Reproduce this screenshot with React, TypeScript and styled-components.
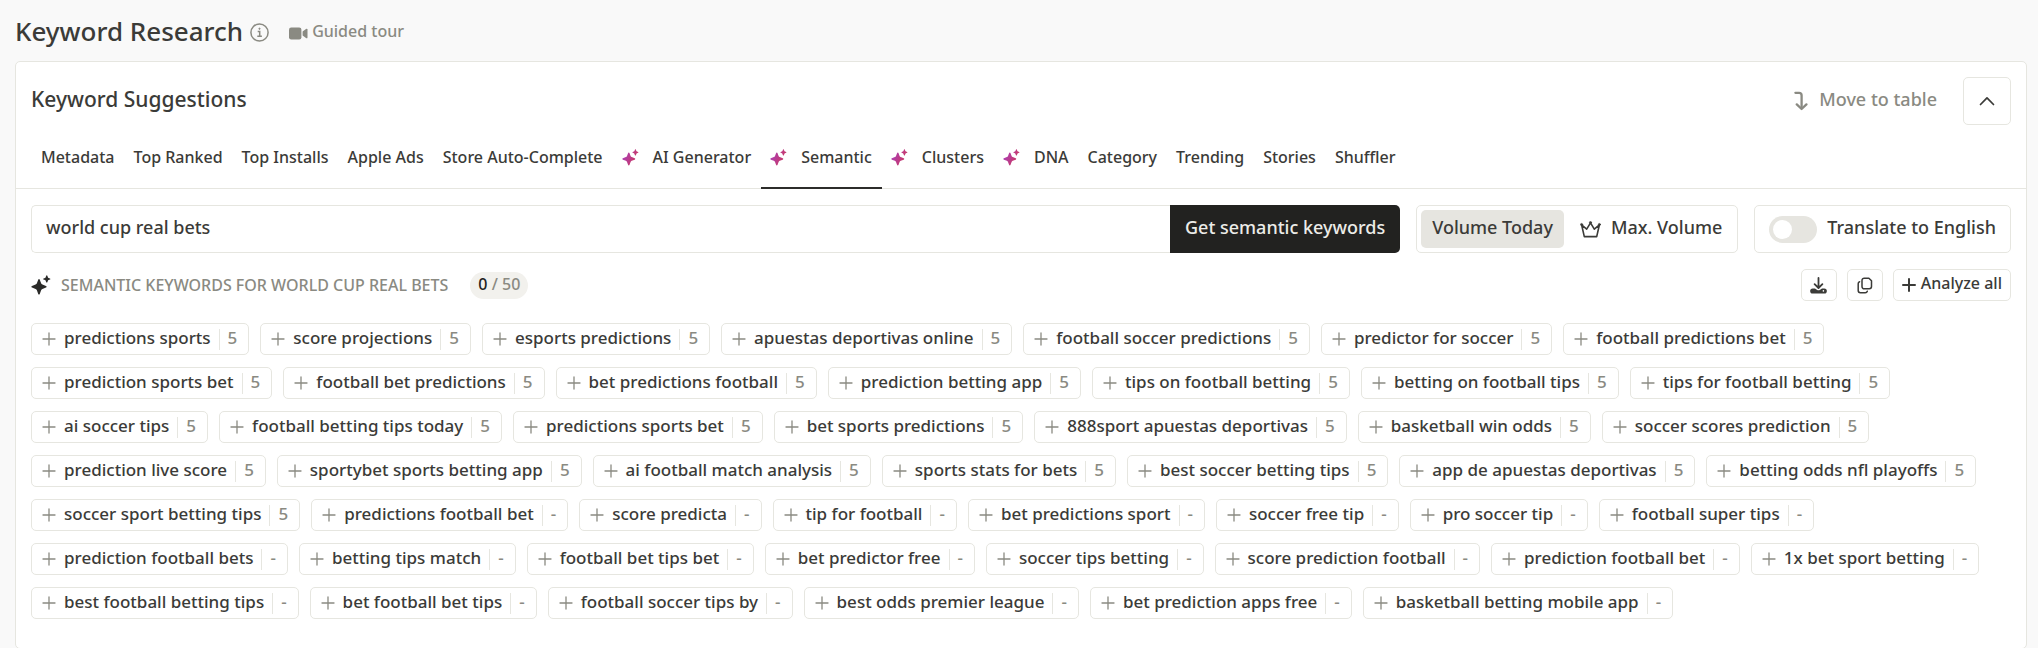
import React, { useState } from "react";
import styled, { createGlobalStyle, css } from "styled-components";

const color = {
  page: "#f9f9f9",
  surface: "#ffffff",
  ink: "#3b3b38",
  dark: "#222220",
  muted: "#8a8a82",
  line: "#e6e6e0",
  fill: "#e6e5e0",
  badge: "#f2f1ed",
};

const GlobalStyle = createGlobalStyle`
  *, *::before, *::after { box-sizing: border-box; }
  body {
    margin: 0;
    background: ${color.page};
    color: ${color.ink};
    font-family: "Noto Sans", "Open Sans", sans-serif;
    font-weight: 500;
  }
  button, input { font: inherit; color: inherit; margin: 0; }
  button { cursor: pointer; background: none; border: 0; padding: 0; }
  h1, h2, h3, p, ul { margin: 0; padding: 0; font-weight: 500; }
  svg { display: block; flex: none; }
`;

const Page = styled.main`
  padding: 0 11px 0 15px;
`;

const PageHeader = styled.header`
  display: flex;
  align-items: center;
  min-height: 61px;
`;

const PageTitle = styled.h1`
  font-size: 26px;
  line-height: 32px;
`;

const InfoButton = styled.button`
  margin: 3px 0 0 7px;
  color: ${color.muted};
`;

const TourLink = styled.a`
  display: flex;
  align-items: center;
  gap: 4px;
  margin-left: 20px;
  color: ${color.muted};
  font-size: 16px;
  line-height: 24px;
  text-decoration: none;

  svg { margin-top: 6px; }
`;

const Card = styled.section`
  background: ${color.surface};
  border: 1px solid ${color.line};
  border-radius: 5px;
`;

const CardHeader = styled.div`
  display: flex;
  align-items: center;
  gap: 26px;
  padding: 15px 15px 0;
`;

const CardTitle = styled.h2`
  flex: 1;
  font-size: 21px;
  line-height: 28px;
  padding-bottom: 4px;
`;

/* Lifts a label slightly above the optical centre of its control. */
const Label = styled.span`
  padding-bottom: 4px;
  white-space: nowrap;
`;

const MoveButton = styled.button`
  display: flex;
  align-items: center;
  gap: 11px;
  color: ${color.muted};
  font-size: 18px;
`;

const CollapseButton = styled.button`
  display: grid;
  place-items: center;
  width: 48px;
  height: 48px;
  border: 1px solid ${color.line};
  border-radius: 5px;
`;

const Tabs = styled.nav`
  display: flex;
  padding: 0 16px;
  border-bottom: 1px solid ${color.line};
`;

const Tab = styled.button<{ $active?: boolean }>`
  display: flex;
  align-items: center;
  gap: 14px;
  height: 64px;
  margin-bottom: -1px;
  padding: 0 10px 0 9px;
  border-top: 2px solid transparent;
  border-bottom: 2px solid ${(p) => (p.$active ? "#2c2c2a" : "transparent")};
  font-size: 16px;
  white-space: nowrap;
`;

const CardBody = styled.div`
  padding: 16px 15px 29px;
`;

const Controls = styled.div`
  display: flex;
  gap: 16px;
`;

const SearchForm = styled.form`
  display: flex;
  flex: 1;
  min-width: 0;
  height: 48px;
`;

const SearchInput = styled.input`
  flex: 1;
  min-width: 0;
  padding: 0 14px 4px;
  border: 1px solid ${color.line};
  border-right: 0;
  border-radius: 5px 0 0 5px;
  background: ${color.surface};
  font-size: 18px;
  outline: none;
`;

const SubmitButton = styled.button`
  padding: 0 15px;
  border-radius: 0 5px 5px 0;
  background: ${color.dark};
  color: #ecece8;
  font-size: 18px;
  white-space: nowrap;
`;

const outlined = css`
  display: flex;
  align-items: center;
  height: 48px;
  border: 1px solid ${color.line};
  border-radius: 5px;
  font-size: 18px;
`;

const VolumeSwitch = styled.div`
  ${outlined}
  padding: 0 4px;
`;

const VolumeOption = styled.button<{ $active?: boolean }>`
  display: flex;
  align-items: center;
  gap: 10px;
  height: 38px;
  padding: 0 11px 0 ${(p) => (p.$active ? "11px" : "16px")};
  border-radius: 5px;
  background: ${(p) => (p.$active ? color.fill : "transparent")};
`;

const TranslateBox = styled.label`
  ${outlined}
  gap: 10px;
  padding: 0 14px;
`;

const Toggle = styled.input`
  appearance: none;
  flex: none;
  display: flex;
  align-items: center;
  width: 48px;
  height: 27px;
  padding: 0 4px;
  border-radius: 14px;
  background: ${color.fill};

  &::before {
    content: "";
    width: 19px;
    height: 19px;
    border-radius: 50%;
    background: ${color.surface};
  }
  &:checked {
    justify-content: flex-end;
    background: ${color.dark};
  }
`;

const ResultHeader = styled.div`
  display: flex;
  align-items: center;
  gap: 10px;
  min-height: 32px;
  margin: 16px 0 22px;
`;

const ResultTitle = styled.h3`
  color: ${color.muted};
  font-size: 16px;
  line-height: 24px;
  text-transform: uppercase;
`;

const Count = styled.span`
  margin-left: 12px;
  padding: 0 8px 3px;
  border-radius: 14px;
  background: ${color.badge};
  color: ${color.muted};
  font-size: 16px;
  line-height: 24px;

  b { color: ${color.dark}; font-weight: 500; }
`;

const Actions = styled.div`
  display: flex;
  gap: 10px;
  margin-left: auto;
`;

const ActionButton = styled.button`
  display: flex;
  align-items: center;
  justify-content: center;
  gap: 5px;
  min-width: 36px;
  height: 32px;
  padding: 0 8px;
  border: 1px solid ${color.line};
  border-radius: 5px;
  font-size: 16px;
`;

const KeywordList = styled.ul`
  display: flex;
  flex-wrap: wrap;
  gap: 12px 11px;
  list-style: none;
`;

const Chip = styled.button`
  display: flex;
  align-items: center;
  gap: 8px;
  height: 32px;
  padding: 0 11px 0 10px;
  border: 1px solid ${color.line};
  border-radius: 5px;
  font-size: 17px;
`;

const ChipVolume = styled.span`
  display: flex;
  align-items: center;
  height: 21px;
  padding: 0 0 4px 8px;
  border-left: 1px solid ${color.line};
  color: ${color.muted};
`;

const InfoIcon = () => (
  <svg width="19" height="19" viewBox="0 0 19 19" fill="none" stroke="currentColor" strokeWidth="1.5">
    <circle cx="9.5" cy="9.5" r="8.6" />
    <path d="M7.7 8.4h2v4.6M7.3 13.2h4.6" />
    <circle cx="9.5" cy="5.7" r="0.7" fill="currentColor" strokeWidth="0.7" />
  </svg>
);

const CameraIcon = () => (
  <svg width="19" height="13" viewBox="0 0 19 13" fill="currentColor">
    <rect x="0" y="0.5" width="12.4" height="12" rx="2.2" />
    <path d="M13.6 4.6 17 1.9c.7-.5 1.5-.1 1.5.7v7.8c0 .8-.8 1.2-1.5.7l-3.4-2.7z" />
  </svg>
);

const MoveIcon = () => (
  <svg width="14" height="20" viewBox="0 0 14 20" fill="none" stroke="currentColor" strokeWidth="2.3" strokeLinecap="round" strokeLinejoin="round">
    <path d="M1.4 1.8H5a2.6 2.6 0 0 1 2.6 2.6V17" />
    <path d="m2.8 13.4 4.8 4.6 4.8-4.6" />
  </svg>
);

const ChevronUp = () => (
  <svg width="16" height="10" viewBox="0 0 16 10" fill="none" stroke="currentColor" strokeWidth="1.7" strokeLinecap="round" strokeLinejoin="round">
    <path d="m1.5 8.5 6.5-6.7 6.5 6.7" />
  </svg>
);

const Sparkle = ({ size, fill }: { size: number; fill: string }) => (
  <svg width={size} height={size} viewBox="0 0 18 18" fill={fill}>
    <defs>
      <linearGradient id="sparkle" gradientUnits="userSpaceOnUse" x1="0" y1="4" x2="17" y2="12">
        <stop offset="0" stopColor="#a73fc0" />
        <stop offset="0.75" stopColor="#c43a72" />
      </linearGradient>
    </defs>
    <path d="M7.2 3.6c.4 0 .6.3.7.6l1.2 3.2c.2.6.6 1 1.2 1.2l3.2 1.3c.7.3.7 1.1 0 1.4l-3.2 1.2c-.6.2-1 .6-1.2 1.2l-1.2 3.3c-.3.7-1.1.7-1.4 0l-1.2-3.3c-.2-.6-.6-1-1.2-1.2L.9 11.3c-.7-.3-.7-1.1 0-1.4l3.2-1.3c.6-.2 1-.6 1.2-1.2l1.2-3.2c.1-.4.4-.6.7-.6z" />
    <path d="M14.2.3c.3 0 .4.2.5.4l.5 1.3c.1.3.3.5.6.6l1.3.5c.4.2.4.8 0 1l-1.3.5c-.3.1-.5.3-.6.6l-.5 1.3c-.2.4-.8.4-1 0l-.5-1.3c-.1-.3-.3-.5-.6-.6l-1.3-.5c-.4-.2-.4-.8 0-1l1.3-.5c.3-.1.5-.3.6-.6l.5-1.3c.1-.2.3-.4.5-.4z" />
  </svg>
);

const CrownIcon = () => (
  <svg width="21" height="17" viewBox="0 0 21 17" fill="none" stroke="currentColor" strokeWidth="1.6" strokeLinejoin="round" strokeLinecap="round">
    <path d="M1.6 3.8 4.3 15.6h12.4l2.7-11.8-5.1 4.4-3.8-6.4-3.8 6.4z" />
    <g fill="currentColor" strokeWidth="0.6">
      <circle cx="1.6" cy="3.5" r="1.1" />
      <circle cx="10.5" cy="1.5" r="1.1" />
      <circle cx="19.4" cy="3.5" r="1.1" />
    </g>
  </svg>
);

const DownloadIcon = () => (
  <svg width="17" height="17" viewBox="0 0 17 17">
    <path
      fill="currentColor"
      fillRule="evenodd"
      d="M2.7 11.4H5l2.2 1.5c.8.5 1.8.5 2.6 0l2.2-1.5h2.3a2.55 2.55 0 0 1 0 5.1H2.7a2.55 2.55 0 0 1 0-5.1zM13.4 13.1a.8.8 0 1 0 0 1.6.8.8 0 0 0 0-1.6z"
    />
    <path d="M8.5 1v9.8M4.6 7.2l3.9 3.8 3.9-3.8" fill="none" stroke="currentColor" strokeWidth="1.8" strokeLinecap="round" strokeLinejoin="round" />
  </svg>
);

const CopyIcon = () => (
  <svg width="16" height="17" viewBox="0 0 16 17" fill="none" stroke="currentColor" strokeWidth="1.5" strokeLinecap="round" strokeLinejoin="round">
    <path d="M7.2 1.2h4.7l2.6 2.6v5.8a2.2 2.2 0 0 1-2.2 2.2H7.2A2.2 2.2 0 0 1 5 9.6V3.4a2.2 2.2 0 0 1 2.2-2.2z" />
    <path d="M2.6 4.8a2 2 0 0 0-1.4 2v6.8a2.2 2.2 0 0 0 2.2 2.2h4.8a2.2 2.2 0 0 0 2.1-1.6" />
  </svg>
);

const PlusIcon = ({ weight = 1.3, stroke = "currentColor" }: { weight?: number; stroke?: string }) => (
  <svg width="14" height="14" viewBox="0 0 14 14" fill="none" stroke={stroke} strokeWidth={weight} strokeLinecap="round">
    <path d="M7 1v12M1 7h12" />
  </svg>
);

const tabs: { name: string; ai?: boolean }[] = [
  { name: "Metadata" },
  { name: "Top Ranked" },
  { name: "Top Installs" },
  { name: "Apple Ads" },
  { name: "Store Auto-Complete" },
  { name: "AI Generator", ai: true },
  { name: "Semantic", ai: true },
  { name: "Clusters", ai: true },
  { name: "DNA", ai: true },
  { name: "Category" },
  { name: "Trending" },
  { name: "Stories" },
  { name: "Shuffler" },
];

const withVolume = [
  "predictions sports", "score projections", "esports predictions", "apuestas deportivas online",
  "football soccer predictions", "predictor for soccer", "football predictions bet",
  "prediction sports bet", "football bet predictions", "bet predictions football",
  "prediction betting app", "tips on football betting", "betting on football tips",
  "tips for football betting", "ai soccer tips", "football betting tips today",
  "predictions sports bet", "bet sports predictions", "888sport apuestas deportivas",
  "basketball win odds", "soccer scores prediction", "prediction live score",
  "sportybet sports betting app", "ai football match analysis", "sports stats for bets",
  "best soccer betting tips", "app de apuestas deportivas", "betting odds nfl playoffs",
  "soccer sport betting tips",
];

const withoutVolume = [
  "predictions football bet", "score predicta", "tip for football", "bet predictions sport",
  "soccer free tip", "pro soccer tip", "football super tips", "prediction football bets",
  "betting tips match", "football bet tips bet", "bet predictor free", "soccer tips betting",
  "score prediction football", "prediction football bet", "1x bet sport betting",
  "best football betting tips", "bet football bet tips", "football soccer tips by",
  "best odds premier league", "bet prediction apps free", "basketball betting mobile app",
];

const keywords = [
  ...withVolume.map((text) => ({ text, volume: "5" })),
  ...withoutVolume.map((text) => ({ text, volume: "-" })),
];

export default function App() {
  const [activeTab, setActiveTab] = useState("Semantic");
  const [query, setQuery] = useState("world cup real bets");
  const [volume, setVolume] = useState<"today" | "max">("today");
  const [translate, setTranslate] = useState(false);

  return (
    <>
      <GlobalStyle />
      <Page>
        <PageHeader>
          <PageTitle>Keyword Research</PageTitle>
          <InfoButton type="button" aria-label="About keyword research"><InfoIcon /></InfoButton>
          <TourLink href="#tour"><CameraIcon />Guided tour</TourLink>
        </PageHeader>

        <Card>
          <CardHeader>
            <CardTitle>Keyword Suggestions</CardTitle>
            <MoveButton type="button"><MoveIcon /><Label>Move to table</Label></MoveButton>
            <CollapseButton type="button" aria-label="Collapse"><ChevronUp /></CollapseButton>
          </CardHeader>

          <Tabs>
            {tabs.map(({ name, ai }) => (
              <Tab key={name} type="button" $active={name === activeTab} onClick={() => setActiveTab(name)}>
                {ai && <Sparkle size={17} fill="url(#sparkle)" />}
                {name}
              </Tab>
            ))}
          </Tabs>

          <CardBody>
            <Controls>
              <SearchForm onSubmit={(e) => e.preventDefault()}>
                <SearchInput aria-label="Keyword" value={query} onChange={(e) => setQuery(e.target.value)} />
                <SubmitButton type="submit"><Label as="div">Get semantic keywords</Label></SubmitButton>
              </SearchForm>
              <VolumeSwitch>
                <VolumeOption type="button" $active={volume === "today"} onClick={() => setVolume("today")}>
                  <Label>Volume Today</Label>
                </VolumeOption>
                <VolumeOption type="button" $active={volume === "max"} onClick={() => setVolume("max")}>
                  <CrownIcon /><Label>Max. Volume</Label>
                </VolumeOption>
              </VolumeSwitch>
              <TranslateBox>
                <Toggle type="checkbox" role="switch" checked={translate} onChange={(e) => setTranslate(e.target.checked)} />
                <Label>Translate to English</Label>
              </TranslateBox>
            </Controls>

            <ResultHeader>
              <Sparkle size={20} fill="#2b2b29" />
              <ResultTitle>Semantic keywords for world cup real bets</ResultTitle>
              <Count><b>0</b> / 50</Count>
              <Actions>
                <ActionButton type="button" aria-label="Download"><DownloadIcon /></ActionButton>
                <ActionButton type="button" aria-label="Copy"><CopyIcon /></ActionButton>
                <ActionButton type="button"><PlusIcon weight={2} /><Label>Analyze all</Label></ActionButton>
              </Actions>
            </ResultHeader>

            <KeywordList>
              {keywords.map((k) => (
                <li key={k.text}>
                  <Chip type="button">
                    <PlusIcon stroke={color.muted} />
                    <Label>{k.text}</Label>
                    <ChipVolume>{k.volume}</ChipVolume>
                  </Chip>
                </li>
              ))}
            </KeywordList>
          </CardBody>
        </Card>
      </Page>
    </>
  );
}
